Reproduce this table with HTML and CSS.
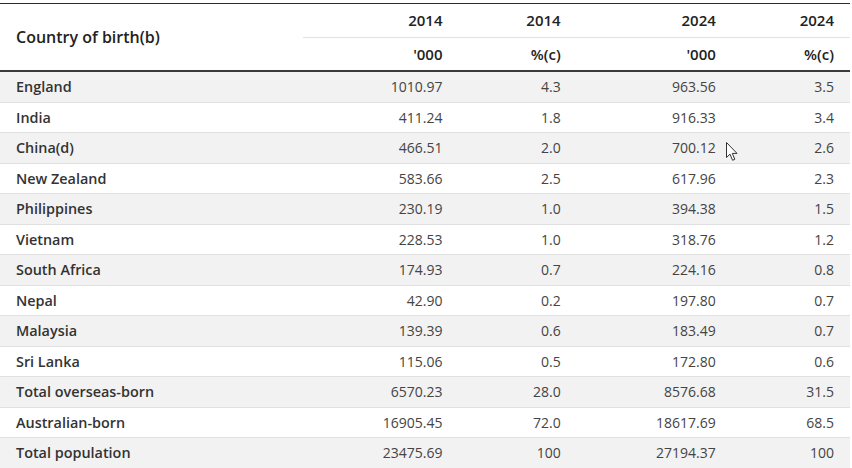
FILE: index.html
```html
<!DOCTYPE html>
<html lang="en">
<head>
<meta charset="utf-8">
<link rel="stylesheet" href="styles.css">
<title>Country of birth</title>
</head>
<body>
<div class="wrap">
<table class="data">
  <colgroup>
    <col class="c-label"><col class="c-wide"><col class="c-narrow"><col class="c-wide"><col class="c-narrow">
  </colgroup>
  <thead>
    <tr class="h1">
      <th class="label" rowspan="2">Country of birth(b)</th>
      <th>2014</th><th>2014</th><th>2024</th><th>2024</th>
    </tr>
    <tr class="h2">
      <th>'000</th><th>%(c)</th><th>'000</th><th>%(c)</th>
    </tr>
  </thead>
  <tbody>
    <tr><th>England</th><td>1010.97</td><td>4.3</td><td>963.56</td><td>3.5</td></tr>
    <tr><th>India</th><td>411.24</td><td>1.8</td><td>916.33</td><td>3.4</td></tr>
    <tr><th>China(d)</th><td>466.51</td><td>2.0</td><td>700.12</td><td>2.6</td></tr>
    <tr><th>New Zealand</th><td>583.66</td><td>2.5</td><td>617.96</td><td>2.3</td></tr>
    <tr><th>Philippines</th><td>230.19</td><td>1.0</td><td>394.38</td><td>1.5</td></tr>
    <tr><th>Vietnam</th><td>228.53</td><td>1.0</td><td>318.76</td><td>1.2</td></tr>
    <tr><th>South Africa</th><td>174.93</td><td>0.7</td><td>224.16</td><td>0.8</td></tr>
    <tr><th>Nepal</th><td>42.90</td><td>0.2</td><td>197.80</td><td>0.7</td></tr>
    <tr><th>Malaysia</th><td>139.39</td><td>0.6</td><td>183.49</td><td>0.7</td></tr>
    <tr><th>Sri Lanka</th><td>115.06</td><td>0.5</td><td>172.80</td><td>0.6</td></tr>
    <tr><th>Total overseas-born</th><td>6570.23</td><td>28.0</td><td>8576.68</td><td>31.5</td></tr>
    <tr><th>Australian-born</th><td>16905.45</td><td>72.0</td><td>18617.69</td><td>68.5</td></tr>
    <tr><th>Total population</th><td>23475.69</td><td>100</td><td>27194.37</td><td>100</td></tr>
  </tbody>
</table>
<svg class="cursor" width="14" height="20" viewBox="0 0 14 20" aria-hidden="true">
  <path d="M0.5 0.5 L0.5 15.5 L4 12.2 L6.6 18.3 L8.8 17.3 L6.3 11.4 L11 11.4 Z" fill="#fff" stroke="#333" stroke-width="1" stroke-linejoin="miter"/>
</svg>
</div>
</body>
</html>
```

FILE: styles.css
```css
html, body {
  margin: 0;
  padding: 0;
  background: #fff;
}
.wrap {
  position: relative;
  padding-top: 3px;
  width: 850px;
}
.data {
  width: 850px;
  table-layout: fixed;
  border-collapse: collapse;
  font-family: "Open Sans", "Noto Sans", sans-serif;
  color: #333;
  border-top: 1px solid #2b2b2b;
}
.c-label { width: 303px; }
.c-wide { width: 155px; }
.c-narrow { width: 118px; }
.data thead th {
  font-size: 15px;
  font-weight: 600;
  line-height: 22px;
  padding: 5px 16px;
  text-align: right;
  color: #222;
}
.data thead .h1 th {
  line-height: 23px;
}
.data thead th.label {
  text-align: left;
  vertical-align: middle;
  font-size: 16px;
}
.data thead .h1 th:not(.label) {
  border-bottom: 1px solid #e2e2e2;
}
.data thead .h2 th {
  border-bottom: 2px solid #3a3a3a;
}
.data thead th.label {
  border-bottom: 2px solid #3a3a3a;
}
.data tbody th,
.data tbody td {
  font-size: 14px;
  line-height: 21px;
  padding: 4.25px 16px;
  border-bottom: 1px solid #e0e0e0;
}
.data tbody th {
  text-align: left;
  font-weight: 600;
  font-size: 14.4px;
  color: #333;
}
.data tbody td {
  text-align: right;
  font-weight: 400;
  color: #444;
}
.data tbody tr:nth-child(odd) {
  background: #f2f2f2;
}
.cursor {
  position: absolute;
  left: 726px;
  top: 142px;
}
```
